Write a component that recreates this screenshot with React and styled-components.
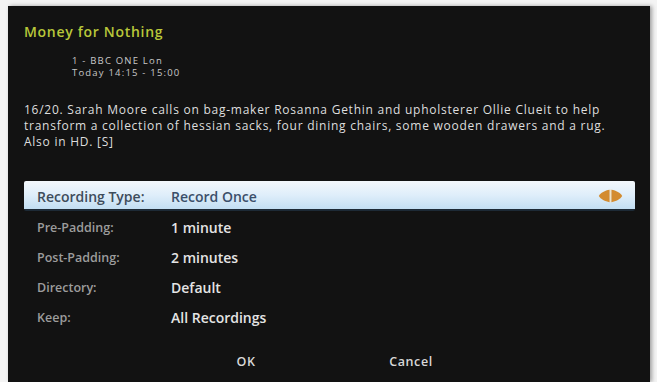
import styled, { createGlobalStyle } from "styled-components";

const GlobalStyle = createGlobalStyle`
  html, body {
    margin: 0;
    padding: 0;
    background: #f4f4f4;
  }
  body {
    font-family: "Open Sans", "Noto Sans", "DejaVu Sans", sans-serif;
  }
`;

const Page = styled.div`
  width: 657px;
  height: 382px;
  padding: 6px 0 0 8px;
  box-sizing: border-box;
  overflow: hidden;
`;

const Dialog = styled.div`
  width: 642px;
  height: 376px;
  background: #121212;
  box-shadow: 2px 0 4px rgba(0, 0, 0, 0.35);
  display: flex;
  flex-direction: column;
  padding: 16px 15px 0 16px;
  box-sizing: border-box;
`;

const Title = styled.h2`
  margin: 0;
  font-size: 14px;
  font-weight: 600;
  letter-spacing: 0.7px;
  line-height: 20px;
  color: #b9c83a;
`;

const Channel = styled.div`
  margin: 13px 0 0 48px;
  font-size: 9.5px;
  letter-spacing: 1.2px;
  line-height: 12px;
  color: #c8c8c8;
`;

const Description = styled.p`
  margin: 23px 0 0;
  font-size: 12px;
  letter-spacing: 0.75px;
  line-height: 16px;
  color: #dedede;
  white-space: nowrap;
`;

const Options = styled.div`
  margin-top: 31px;
  width: 611px;
  display: flex;
  flex-direction: column;
`;

const Row = styled.div`
  height: 30px;
  display: flex;
  align-items: center;
  padding: 2px 12px 0 13px;
  box-sizing: border-box;
  background: ${(p) =>
    p.$selected
      ? "linear-gradient(#f4f8fc 0%, #dfeefa 50%, #c2def2 100%)"
      : "transparent"};
  border-bottom: ${(p) => (p.$selected ? "2px solid #1d2a36" : "none")};
  border-radius: ${(p) => (p.$selected ? "2px" : "0")};
`;

const Label = styled.span`
  width: 134px;
  font-size: ${(p) => (p.$selected ? "14px" : "12.5px")};
  font-weight: 600;
  color: ${(p) => (p.$selected ? "#3e4c5b" : "#9c9c9c")};
`;

const Value = styled.span`
  flex: 1;
  font-size: 14px;
  font-weight: 600;
  color: ${(p) => (p.$selected ? "#3b4f6a" : "#e4e4e4")};
`;

const Buttons = styled.div`
  margin-top: auto;
  margin-bottom: 5px;
  display: flex;
  justify-content: center;
  padding-right: 2px;
`;

const Button = styled.div`
  width: 165px;
  text-align: center;
  font-size: 12.5px;
  font-weight: 600;
  letter-spacing: 0.6px;
  line-height: 30px;
  color: #d8d8d8;
`;

const Spinner = () => (
  <svg width="25" height="14" viewBox="0 0 25 14">
    <path d="M11.6 0.8 C7 1.5 2.5 4 0.8 7 C2.5 10 7 12.5 11.6 13.2 Z" fill="#d38b2f" />
    <path d="M13.4 0.8 C18 1.5 22.5 4 24.2 7 C22.5 10 18 12.5 13.4 13.2 Z" fill="#d38b2f" />
    <line x1="12.5" y1="0.5" x2="12.5" y2="13.5" stroke="#f2e4c6" strokeWidth="1.2" />
  </svg>
);

const options = [
  { label: "Recording Type:", value: "Record Once", selected: true },
  { label: "Pre-Padding:", value: "1 minute" },
  { label: "Post-Padding:", value: "2 minutes" },
  { label: "Directory:", value: "Default" },
  { label: "Keep:", value: "All Recordings" },
];

export default function App() {
  return (
    <>
      <GlobalStyle />
      <Page>
        <Dialog>
          <Title>Money for Nothing</Title>
          <Channel>
            1 - BBC ONE Lon
            <br />
            Today 14:15 - 15:00
          </Channel>
          <Description>
            16/20. Sarah Moore calls on bag-maker Rosanna Gethin and upholsterer Ollie Clueit to help
            <br />
            transform a collection of hessian sacks, four dining chairs, some wooden drawers and a rug.
            <br />
            Also in HD. [S]
          </Description>
          <Options>
            {options.map((o) => (
              <Row key={o.label} $selected={o.selected}>
                <Label $selected={o.selected}>{o.label}</Label>
                <Value $selected={o.selected}>{o.value}</Value>
                {o.selected && <Spinner />}
              </Row>
            ))}
          </Options>
          <Buttons>
            <Button>OK</Button>
            <Button>Cancel</Button>
          </Buttons>
        </Dialog>
      </Page>
    </>
  );
}
